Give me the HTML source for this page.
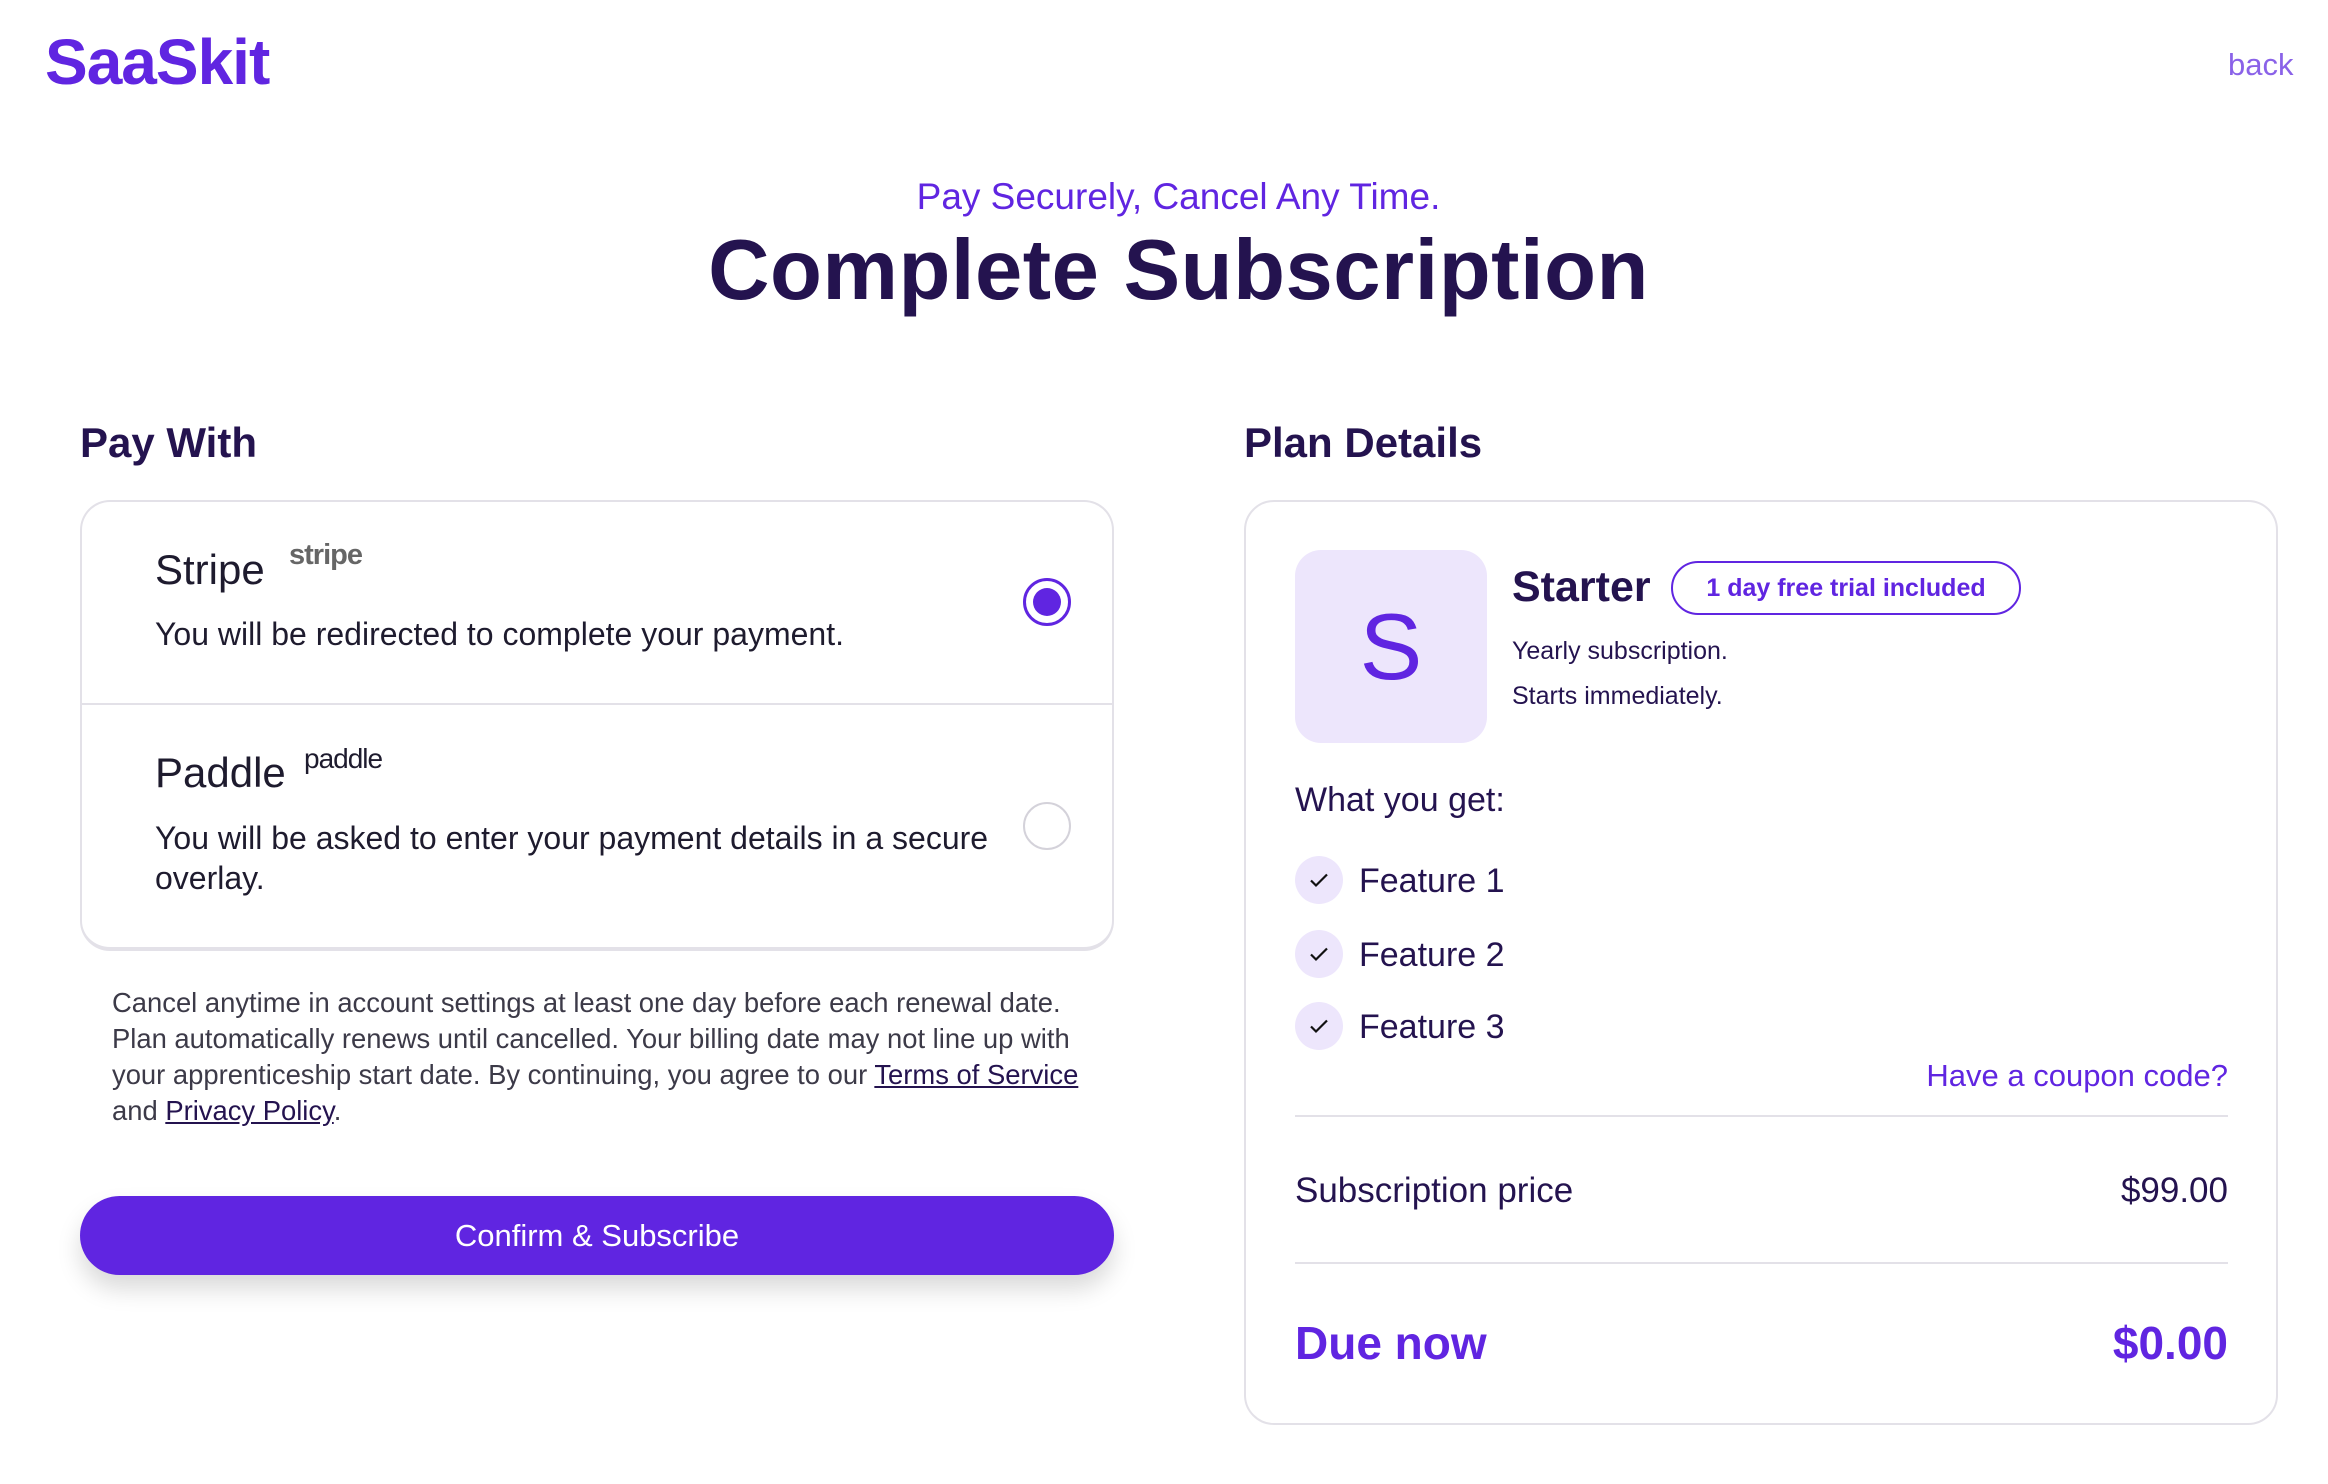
<!DOCTYPE html>
<html><head><meta charset="utf-8"><style>
*{margin:0;padding:0;box-sizing:border-box}
body{width:2328px;height:1484px;background:#fff;font-family:"Liberation Sans",sans-serif;color:#24134f;position:relative;overflow:hidden}
.a{position:absolute;white-space:nowrap;line-height:1}
.p{color:#6025e1}
.card{position:absolute;border:2px solid #e3e1e8;border-radius:30px;background:#fff}
.radio{position:absolute;width:48px;height:48px;border-radius:50%;border:2px solid #d4d2da}
.chk{position:absolute;left:1295px;width:48px;height:48px;border-radius:50%;background:#ede6fc}
.chk svg{position:absolute;left:12px;top:12px}
.hr{position:absolute;left:1295px;width:933px;height:2px;background:#e3e1e8}
</style></head><body>
<div class="a p" style="left:45px;top:30px;font-size:64px;font-weight:bold;letter-spacing:-1px">SaaSkit</div>
<div class="a" style="left:2228px;top:49px;font-size:31px;color:#8a62e8">back</div>
<div class="a p" style="left:0;width:2357px;text-align:center;top:178px;font-size:37px">Pay Securely, Cancel Any Time.</div>
<div class="a" style="left:0;width:2357px;text-align:center;top:228px;font-size:85px;font-weight:bold;letter-spacing:0.5px">Complete Subscription</div>

<div class="a" style="left:80px;top:422px;font-size:42px;font-weight:bold">Pay With</div>
<div class="a" style="left:1244px;top:422px;font-size:42px;font-weight:bold">Plan Details</div>

<div class="card" style="left:80px;top:500px;width:1034px;height:451px;border-bottom-width:4px"></div>
<div style="position:absolute;left:82px;top:703px;width:1030px;height:2px;background:#e3e1e8"></div>
<div class="a" style="left:155px;top:549px;font-size:42px;color:#1e1b2e">Stripe</div>
<div class="a" style="left:289px;top:541px;font-size:29px;font-weight:bold;color:#666;letter-spacing:-1px">stripe</div>
<div class="a" style="left:155px;top:618px;font-size:32px;color:#1e1b2e">You will be redirected to complete your payment.</div>
<div class="radio" style="left:1023px;top:578px;border-color:#6025e1;border-width:3px"><div style="position:absolute;left:7px;top:7px;width:28px;height:28px;border-radius:50%;background:#6025e1"></div></div>
<div class="a" style="left:155px;top:752px;font-size:42px;color:#1e1b2e">Paddle</div>
<div class="a" style="left:304px;top:745px;font-size:28px;color:#1e1b2e;letter-spacing:-1px">paddle</div>
<div class="a" style="left:155px;top:822px;font-size:32px;color:#1e1b2e">You will be asked to enter your payment details in a secure</div>
<div class="a" style="left:155px;top:862px;font-size:32px;color:#1e1b2e">overlay.</div>
<div class="radio" style="left:1023px;top:802px"></div>

<div style="position:absolute;left:112px;top:985px;font-size:27.4px;line-height:36px;color:#3c3a48;white-space:nowrap">Cancel anytime in account settings at least one day before each renewal date.<br>Plan automatically renews until cancelled. Your billing date may not line up with<br>your apprenticeship start date. By continuing, you agree to our <u style="color:#24134f">Terms of Service</u><br>and <u style="color:#24134f">Privacy Policy</u>.</div>

<div style="position:absolute;left:80px;top:1196px;width:1034px;height:79px;border-radius:40px;background:#6025e1;box-shadow:0 14px 24px rgba(0,0,0,.15);color:#fff;font-size:31px;text-align:center;line-height:79px">Confirm &amp; Subscribe</div>

<div class="card" style="left:1244px;top:500px;width:1034px;height:925px"></div>
<div style="position:absolute;left:1295px;top:550px;width:192px;height:193px;border-radius:26px;background:#ede6fc;color:#6025e1;font-size:94px;text-align:center;line-height:193px">S</div>
<div class="a" style="left:1512px;top:566px;font-size:43px;font-weight:bold">Starter</div>
<div style="position:absolute;left:1671px;top:561px;width:350px;height:54px;border:2px solid #6025e1;border-radius:28px;color:#6025e1;font-size:25px;font-weight:bold;text-align:center;line-height:50px">1 day free trial included</div>
<div class="a" style="left:1512px;top:639px;font-size:25px">Yearly subscription.</div>
<div class="a" style="left:1512px;top:684px;font-size:25px">Starts immediately.</div>
<div class="a" style="left:1295px;top:783px;font-size:34px">What you get:</div>
<div class="chk" style="top:856px"><svg width="24" height="24" viewBox="0 0 24 24"><path d="M4 12.5l5 5L20 6.5" fill="none" stroke="#111" stroke-width="2.2"/></svg></div>
<div class="a" style="left:1359px;top:864px;font-size:34px">Feature 1</div>
<div class="chk" style="top:930px"><svg width="24" height="24" viewBox="0 0 24 24"><path d="M4 12.5l5 5L20 6.5" fill="none" stroke="#111" stroke-width="2.2"/></svg></div>
<div class="a" style="left:1359px;top:938px;font-size:34px">Feature 2</div>
<div class="chk" style="top:1002px"><svg width="24" height="24" viewBox="0 0 24 24"><path d="M4 12.5l5 5L20 6.5" fill="none" stroke="#111" stroke-width="2.2"/></svg></div>
<div class="a" style="left:1359px;top:1010px;font-size:34px">Feature 3</div>
<div class="a p" style="right:100px;top:1060px;font-size:31px">Have a coupon code?</div>
<div class="hr" style="top:1115px"></div>
<div class="a" style="left:1295px;top:1173px;font-size:35px">Subscription price</div>
<div class="a" style="right:100px;top:1173px;font-size:35px">$99.00</div>
<div class="hr" style="top:1262px"></div>
<div class="a p" style="left:1295px;top:1320px;font-size:46px;font-weight:bold">Due now</div>
<div class="a p" style="right:100px;top:1320px;font-size:46px;font-weight:bold">$0.00</div>
</body></html>
